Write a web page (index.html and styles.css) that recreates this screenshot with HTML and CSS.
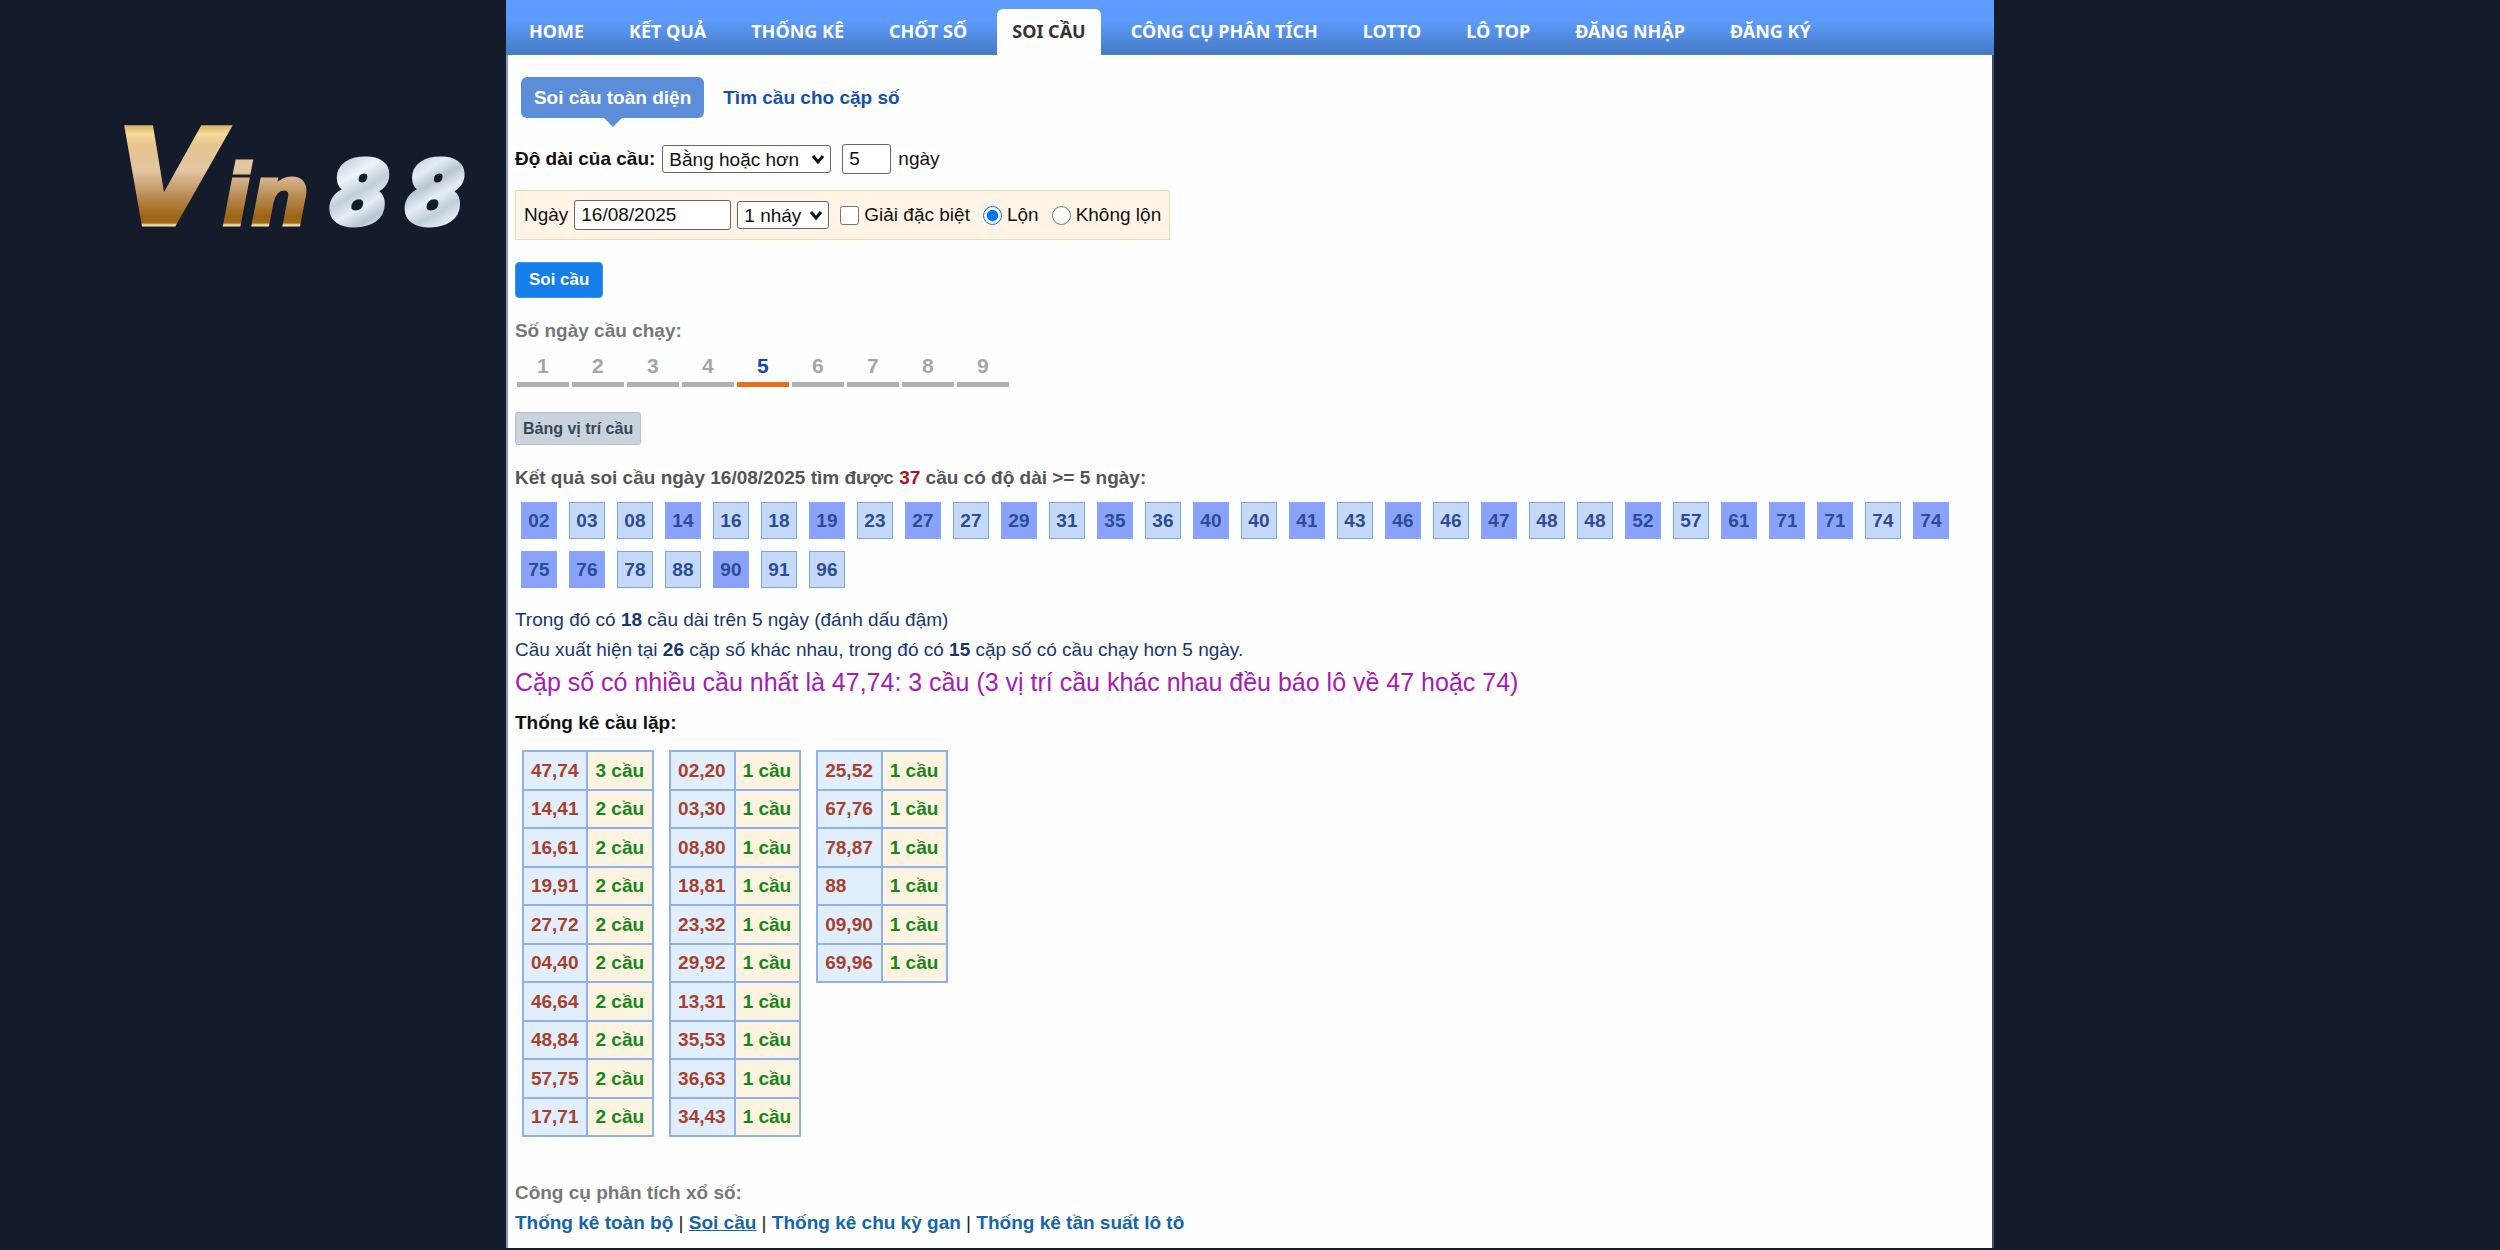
FILE: index.html
```html
<!DOCTYPE html>
<html lang="vi">

<head>
    <meta charset="UTF-8">
    <meta name="viewport" content="width=device-width, initial-scale=1.0">
    <title>Soi cầu</title>
    <link rel="stylesheet" href="styles.css">
</head>

<body>
    <div class="layout">
        <aside class="side">
            <svg class="logo" viewBox="0 0 360 110" role="img" aria-label="Vin88">
                <defs>
                    <linearGradient id="gold" x1="0" y1="4" x2="0" y2="108" gradientUnits="userSpaceOnUse">
                        <stop offset="0" stop-color="#d9a95c" />
                        <stop offset="0.1" stop-color="#f6dc9c" />
                        <stop offset="0.2" stop-color="#e6c48c" />
                        <stop offset="0.45" stop-color="#e3c6a2" />
                        <stop offset="0.7" stop-color="#b98c55" />
                        <stop offset="0.9" stop-color="#9c6414" />
                        <stop offset="0.96" stop-color="#a06a1c" />
                        <stop offset="0.98" stop-color="#f3dfae" />
                    </linearGradient>
                    <linearGradient id="silver" x1="200" y1="44" x2="236" y2="106" gradientUnits="userSpaceOnUse" spreadMethod="reflect">
                        <stop offset="0" stop-color="#b4c4d0" />
                        <stop offset="0.35" stop-color="#eef4f9" />
                        <stop offset="0.6" stop-color="#c0ced9" />
                        <stop offset="0.8" stop-color="#e6eef5" />
                        <stop offset="1" stop-color="#b7c6d1" />
                    </linearGradient>
                </defs>
                <text class="logo-v" x="-8" y="105">V</text>
                <text class="logo-in" x="98" y="106">in</text>
                <text class="logo-88" x="208 284" y="104">88</text>
            </svg>
        </aside>

        <main class="panel">
            <nav class="nav">
                <a href="#">HOME</a>
                <a href="#">KẾT QUẢ</a>
                <a href="#">THỐNG KÊ</a>
                <a href="#">CHỐT SỐ</a>
                <a href="#" class="active">SOI CẦU</a>
                <a href="#">CÔNG CỤ PHÂN TÍCH</a>
                <a href="#">LOTTO</a>
                <a href="#">LÔ TOP</a>
                <a href="#">ĐĂNG NHẬP</a>
                <a href="#">ĐĂNG KÝ</a>
            </nav>

            <div class="content">
                <div class="tabs">
                    <a href="#" class="tab active">Soi cầu toàn diện</a>
                    <a href="#" class="tab">Tìm cầu cho cặp số</a>
                </div>

                <form class="search">
                    <div class="row">
                        <label for="compare" class="bold">Độ dài của cầu:</label>
                        <select id="compare" class="compare">
                            <option>Bằng hoặc hơn</option>
                            <option>Bằng</option>
                        </select>
                        <input type="text" id="length" class="length" value="5">
                        <label for="length">ngày</label>
                    </div>
                    <div class="options">
                        <label for="date">Ngày</label>
                        <input type="text" id="date" class="date" value="16/08/2025">
                        <select id="hits" class="hits" aria-label="Số nháy">
                            <option>1 nháy</option>
                            <option>2 nháy</option>
                        </select>
                        <label class="check"><input type="checkbox"> Giải đặc biệt</label>
                        <label class="check"><input type="radio" name="flip" checked> Lộn</label>
                        <label class="check"><input type="radio" name="flip"> Không lộn</label>
                    </div>
                    <button type="button" class="submit">Soi cầu</button>
                </form>

                <p class="days-title">Số ngày cầu chạy:</p>
                <div class="days">
                    <a href="#">1</a>
                    <a href="#">2</a>
                    <a href="#">3</a>
                    <a href="#">4</a>
                    <a href="#" class="active">5</a>
                    <a href="#">6</a>
                    <a href="#">7</a>
                    <a href="#">8</a>
                    <a href="#">9</a>
                </div>

                <button type="button" class="position">Bảng vị trí cầu</button>

                <p class="result-title">Kết quả soi cầu ngày 16/08/2025 tìm được <span class="red">37</span> cầu có độ dài &gt;= 5 ngày:</p>
                <div class="numbers">
                    <a href="#" class="dark">02</a>
                    <a href="#">03</a>
                    <a href="#">08</a>
                    <a href="#" class="dark">14</a>
                    <a href="#">16</a>
                    <a href="#">18</a>
                    <a href="#" class="dark">19</a>
                    <a href="#">23</a>
                    <a href="#" class="dark">27</a>
                    <a href="#">27</a>
                    <a href="#" class="dark">29</a>
                    <a href="#">31</a>
                    <a href="#" class="dark">35</a>
                    <a href="#">36</a>
                    <a href="#" class="dark">40</a>
                    <a href="#">40</a>
                    <a href="#" class="dark">41</a>
                    <a href="#">43</a>
                    <a href="#" class="dark">46</a>
                    <a href="#">46</a>
                    <a href="#" class="dark">47</a>
                    <a href="#">48</a>
                    <a href="#">48</a>
                    <a href="#" class="dark">52</a>
                    <a href="#">57</a>
                    <a href="#" class="dark">61</a>
                    <a href="#" class="dark">71</a>
                    <a href="#" class="dark">71</a>
                    <a href="#">74</a>
                    <a href="#" class="dark">74</a>
                    <a href="#" class="dark">75</a>
                    <a href="#" class="dark">76</a>
                    <a href="#">78</a>
                    <a href="#">88</a>
                    <a href="#" class="dark">90</a>
                    <a href="#">91</a>
                    <a href="#">96</a>
                </div>

                <div class="summary">
                    <p>Trong đó có <b>18</b> cầu dài trên 5 ngày (đánh dấu đậm)</p>
                    <p>Cầu xuất hiện tại <b>26</b> cặp số khác nhau, trong đó có <b>15</b> cặp số có cầu chạy hơn 5 ngày.</p>
                    <p class="most">Cặp số có nhiều cầu nhất là 47,74: 3 cầu (3 vị trí cầu khác nhau đều báo lô về 47 hoặc 74)</p>
                </div>

                <h2>Thống kê cầu lặp:</h2>
                <div class="stats">
                    <table>
                        <tr><td>47,74</td><td>3 cầu</td></tr>
                        <tr><td>14,41</td><td>2 cầu</td></tr>
                        <tr><td>16,61</td><td>2 cầu</td></tr>
                        <tr><td>19,91</td><td>2 cầu</td></tr>
                        <tr><td>27,72</td><td>2 cầu</td></tr>
                        <tr><td>04,40</td><td>2 cầu</td></tr>
                        <tr><td>46,64</td><td>2 cầu</td></tr>
                        <tr><td>48,84</td><td>2 cầu</td></tr>
                        <tr><td>57,75</td><td>2 cầu</td></tr>
                        <tr><td>17,71</td><td>2 cầu</td></tr>
                    </table>
                    <table>
                        <tr><td>02,20</td><td>1 cầu</td></tr>
                        <tr><td>03,30</td><td>1 cầu</td></tr>
                        <tr><td>08,80</td><td>1 cầu</td></tr>
                        <tr><td>18,81</td><td>1 cầu</td></tr>
                        <tr><td>23,32</td><td>1 cầu</td></tr>
                        <tr><td>29,92</td><td>1 cầu</td></tr>
                        <tr><td>13,31</td><td>1 cầu</td></tr>
                        <tr><td>35,53</td><td>1 cầu</td></tr>
                        <tr><td>36,63</td><td>1 cầu</td></tr>
                        <tr><td>34,43</td><td>1 cầu</td></tr>
                    </table>
                    <table>
                        <tr><td>25,52</td><td>1 cầu</td></tr>
                        <tr><td>67,76</td><td>1 cầu</td></tr>
                        <tr><td>78,87</td><td>1 cầu</td></tr>
                        <tr><td>88</td><td>1 cầu</td></tr>
                        <tr><td>09,90</td><td>1 cầu</td></tr>
                        <tr><td>69,96</td><td>1 cầu</td></tr>
                    </table>
                </div>

                <div class="tools">
                    <p>Công cụ phân tích xổ số:</p>
                    <a href="#">Thống kê toàn bộ</a> |
                    <a href="#" class="current">Soi cầu</a> |
                    <a href="#">Thống kê chu kỳ gan</a> |
                    <a href="#">Thống kê tần suất lô tô</a>
                </div>
            </div>
        </main>
    </div>
</body>

</html>
```
FILE: styles.css
```css
* {
    box-sizing: border-box;
}

body {
    margin: 0;
    background-color: #141c2c;
    color: #111;
    font-family: "Liberation Sans", Arial, sans-serif;
    font-size: 19px;
    line-height: 30px;
}

p,
h2 {
    margin: 0;
    font-size: inherit;
}

a {
    text-decoration: none;
}

.layout {
    display: grid;
    grid-template-columns: 34fr 100fr 34fr;
    min-height: calc(100vh - 2px);
}

.side {
    padding: 120px 24px 0 0;
    text-align: right;
}

.logo {
    width: 74%;
    overflow: visible;
}

.logo text {
    font-family: "DejaVu Sans", sans-serif;
    font-weight: bold;
    font-style: italic;
}

.logo-v {
    font-size: 134px;
    fill: url(#gold);
    stroke: url(#gold);
    stroke-width: 5px;
}

.logo-in {
    font-size: 84px;
    fill: url(#gold);
    stroke: url(#gold);
    stroke-width: 3px;
}

.logo-88 {
    font-size: 84px;
    fill: url(#silver);
    stroke: url(#silver);
    stroke-width: 7px;
}

.panel {
    background-color: #fefefe;
    border-left: 2px solid #8d96c4;
    border-right: 2px solid #3c4d6b;
}

/* top menu */
.nav {
    display: flex;
    gap: 15px;
    height: 55px;
    margin: 0 -2px;
    padding: 9px 8px 0;
    background: linear-gradient(#5e9dff, #5c9bfb 40%, #467ac4);
    border-bottom: 1px solid #4a80cc;
}

.nav a {
    height: 46px;
    padding: 0 15px;
    border-radius: 6px 6px 0 0;
    color: #fff;
    font-family: "Noto Sans", Tahoma, sans-serif;
    font-size: 18px;
    font-weight: bold;
    line-height: 44px;
    white-space: nowrap;
}

.nav .active {
    background-color: #fefefe;
    color: #333;
}

.content {
    padding: 22px 7px 0;
}

.tabs {
    display: flex;
    gap: 6px;
    padding-left: 6px;
}

.tab {
    position: relative;
    padding: 0 13px;
    border-radius: 6px;
    color: #1650a8;
    font-weight: bold;
    line-height: 41px;
}

.tab.active {
    background-color: #5b8dd9;
    color: #fff;
}

/* small arrow under the open tab */
.tab.active::after {
    content: "";
    position: absolute;
    top: 100%;
    left: 50%;
    margin-left: -9px;
    border: 9px solid transparent;
    border-top-color: #5b8dd9;
    border-bottom: 0;
}

.row {
    display: flex;
    align-items: center;
    gap: 7px;
    margin: 26px 0 16px;
}

.bold {
    font-weight: bold;
}

input,
select {
    margin: 0;
    border: 1px solid #666;
    border-radius: 3px;
    background-color: #fff;
    color: #111;
    font-family: inherit;
    font-size: 19px;
}

input[type="text"] {
    height: 30px;
    padding: 0 6px;
}

select {
    height: 28px;
    padding: 0 22px 0 6px;
    appearance: none;
    background-image: url("data:image/svg+xml,%3Csvg xmlns='http://www.w3.org/2000/svg' viewBox='0 0 14 9'%3E%3Cpath d='M2 1 7 7l5-6' fill='none' stroke='%23111' stroke-width='3'/%3E%3C/svg%3E");
    background-repeat: no-repeat;
    background-position: right 5px center;
    background-size: 14px 9px;
}

.compare {
    width: 169px;
    margin-right: 4px;
}

input.length {
    width: 49px;
}

.date {
    width: 157px;
}

.hits {
    width: 92px;
}

.options {
    display: inline-flex;
    align-items: center;
    gap: 6px;
    padding: 9px 8px;
    border: 1px solid #f5d9ae;
    background-color: #fff4e6;
}

.check {
    display: flex;
    align-items: center;
    gap: 5px;
    margin-left: 5px;
}

.check input {
    width: 19px;
    height: 19px;
}

.check + .check {
    margin-left: 7px;
}

.submit {
    display: block;
    margin-top: 22px;
    padding: 0 13px;
    border: 1px solid #3d94f0;
    border-radius: 4px;
    background-color: #167ee8;
    color: #fff;
    font-family: inherit;
    font-size: 17px;
    font-weight: bold;
    line-height: 34px;
}

.days-title {
    margin-top: 18px;
    color: #777;
    font-weight: bold;
}

.days {
    display: flex;
    gap: 3px;
    margin: 4px 0 25px 2px;
}

.days a {
    width: 52px;
    border-bottom: 5px solid #b0b0b0;
    color: #a5a5a5;
    font-size: 21px;
    font-weight: bold;
    line-height: 32px;
    text-align: center;
}

.days .active {
    border-color: #e8701c;
    color: #1249b0;
}

.position {
    display: block;
    padding: 0 7px;
    border: 1px solid #b3bfc9;
    border-radius: 3px;
    background-color: #c8d3db;
    color: #39465a;
    font-family: inherit;
    font-size: 16px;
    font-weight: bold;
    line-height: 31px;
}

.result-title {
    margin: 18px 0 9px;
    color: #555;
    font-weight: bold;
}

.red {
    color: #b0121e;
}

.numbers {
    display: flex;
    flex-wrap: wrap;
    gap: 12px;
    padding-left: 6px;
}

.numbers a {
    width: 36px;
    border: 1px solid #78a5e6;
    background-color: #c5dafb;
    color: #2c4c94;
    font-weight: bold;
    line-height: 35px;
    text-align: center;
}

.numbers .dark {
    border-color: #86a4fb;
    background-color: #89a3fd;
}

.summary {
    margin: 17px 0 11px;
    color: #17376e;
}

.summary .most {
    margin-top: 2px;
    color: #a819b4;
    font-size: 25px;
}

.stats {
    display: flex;
    align-items: flex-start;
    gap: 15px;
    padding: 12px 0 0 7px;
}

table {
    border-collapse: collapse;
}

td {
    height: 39px;
    padding: 0 8px 0 7px;
    border: 2px solid #8fb0ef;
    background-color: #e0eefd;
    color: #a8412c;
    font-weight: bold;
}

tr:nth-child(even) td {
    height: 38px;
}

td + td {
    background-color: #fdf3e1;
    color: #17861a;
}

.tools {
    margin-top: 41px;
    color: #222;
}

.tools p {
    color: #777;
    font-weight: bold;
}

.tools a {
    color: #1565a8;
    font-weight: bold;
}

.tools .current {
    text-decoration: underline;
}
```
